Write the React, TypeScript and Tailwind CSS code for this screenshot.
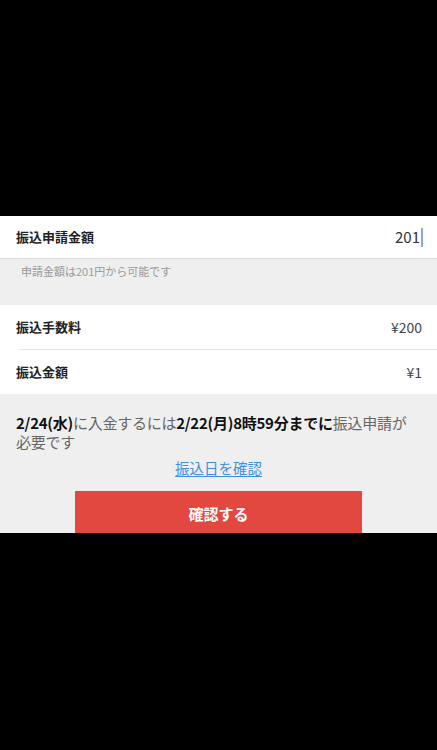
import React from "react";

const jp = { fontFamily: '"Noto Sans CJK JP", "Noto Sans", sans-serif' };

export default function App() {
  return (
    <div className="w-[437px] h-[750px] bg-black overflow-hidden" style={jp}>
      <div className="h-[216px]" />
      <div className="h-[317px] bg-[#efefef] overflow-hidden">
        <div className="bg-white h-[43px] flex items-center justify-between pl-4 pr-[14px] border-b border-[#dedede]">
          <span className="text-[13px] font-bold text-[#222]">振込申請金額</span>
          <span className="text-[15px] text-[#333] flex items-center">
            201
            <span className="inline-block w-[2px] h-[19px] bg-[#8aa8e8] ml-[1px]" />
          </span>
        </div>
        <div className="h-[46px] pl-[21px] pt-[4px] text-[11px] leading-[16px] text-[#999]">
          申請金額は201円から可能です
        </div>
        <div className="bg-white">
          <div className="h-[44px] flex items-center justify-between pl-4 pr-[15px]">
            <span className="text-[13px] font-bold text-[#222]">振込手数料</span>
            <span className="text-[14px] text-[#444]">¥200</span>
          </div>
          <div className="ml-[19px] border-t border-[#e6e6e6]" />
          <div className="h-[44px] flex items-center justify-between pl-4 pr-[15px]">
            <span className="text-[13px] font-bold text-[#222]">振込金額</span>
            <span className="text-[14px] text-[#444]">¥1</span>
          </div>
        </div>
        <div className="px-4 pt-[19px]">
          <p className="text-[15px] leading-[19px] text-[#666] tracking-[-0.25px]">
            <span className="font-bold text-[#111]">2/24(水)</span>
            <span>に入金するには</span>
            <span className="font-bold text-[#111]">2/22(月)8時59分までに</span>
            <span>振込申請が</span>
            <br />
            <span>必要です</span>
          </p>
          <div className="flex justify-center mt-[6px]">
            <span className="text-[14.5px] text-[#3d8fe0] underline underline-offset-2">振込日を確認</span>
          </div>
          <div className="flex justify-center mt-[12px]">
            <div className="w-[287px] h-[46px] bg-[#e2483f] flex items-center justify-center">
              <span className="text-[15px] font-bold text-white">確認する</span>
            </div>
          </div>
        </div>
      </div>
    </div>
  );
}
